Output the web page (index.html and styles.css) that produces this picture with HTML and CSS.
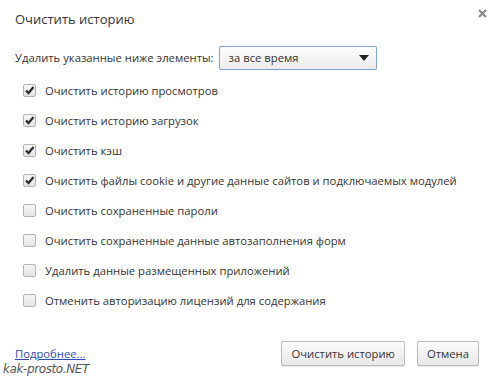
FILE: index.html
```html
<!DOCTYPE html>
<html lang="ru">
<head>
<meta charset="utf-8">
<link rel="stylesheet" href="styles.css">
</head>
<body>
<div class="dialog">
  <div class="header">
    <h1 class="title">Очистить историю</h1>
    <svg class="close" width="9" height="9" viewBox="0 0 9 9"><path d="M1 1L8 8M8 1L1 8" stroke="#8a8a8a" stroke-width="2.2"/></svg>
  </div>
  <div class="range">
    <span>Удалить указанные ниже элементы:</span>
    <div class="select"><span>за все время</span><svg width="10" height="6" viewBox="0 0 10 6"><path d="M0 0H10L5 6Z" fill="#222"/></svg></div>
  </div>
  <ul class="list">
    <li><span class="cb on"><svg width="11" height="11" viewBox="0 0 11 11"><path d="M2 5.5L4.5 8L9.5 2" stroke="#2b2b2b" stroke-width="2.2" fill="none"/></svg></span>Очистить историю просмотров</li>
    <li><span class="cb on"><svg width="11" height="11" viewBox="0 0 11 11"><path d="M2 5.5L4.5 8L9.5 2" stroke="#2b2b2b" stroke-width="2.2" fill="none"/></svg></span>Очистить историю загрузок</li>
    <li><span class="cb on"><svg width="11" height="11" viewBox="0 0 11 11"><path d="M2 5.5L4.5 8L9.5 2" stroke="#2b2b2b" stroke-width="2.2" fill="none"/></svg></span>Очистить кэш</li>
    <li><span class="cb on"><svg width="11" height="11" viewBox="0 0 11 11"><path d="M2 5.5L4.5 8L9.5 2" stroke="#2b2b2b" stroke-width="2.2" fill="none"/></svg></span>Очистить файлы cookie и другие данные сайтов и подключаемых модулей</li>
    <li><span class="cb"></span>Очистить сохраненные пароли</li>
    <li><span class="cb"></span>Очистить сохраненные данные автозаполнения форм</li>
    <li><span class="cb"></span>Удалить данные размещенных приложений</li>
    <li><span class="cb"></span>Отменить авторизацию лицензий для содержания</li>
  </ul>
  <div class="footer">
    <a class="more" href="#">Подробнее...</a>
    <div class="buttons">
      <button class="btn">Очистить историю</button>
      <button class="btn">Отмена</button>
    </div>
  </div>
  <div class="wm">kak-prosto.NET</div>
</div>
</body>
</html>
```
FILE: styles.css
```css
html, body { margin: 0; padding: 0; background: #fff; }
body {
  width: 498px; height: 379px; overflow: hidden;
  font-family: "Open Sans", "Noto Sans", sans-serif;
  font-size: 11.27px; color: #333;
}
.dialog { position: relative; height: 379px; padding: 0 0 0 15px; box-sizing: border-box; }
.header { display: flex; justify-content: space-between; align-items: flex-start; height: 45px; padding-right: 11px; }
.title { margin: 0; padding-top: 10px; font-weight: normal; font-size: 13px; color: #333; }
.close { margin-top: 9px; }
.range { display: flex; align-items: center; gap: 5px; height: 25px; }
.select {
  width: 158px; height: 24px; box-sizing: border-box;
  border: 1px solid #7fa3d6; border-radius: 2px;
  background: linear-gradient(#fdfdfd, #ececec);
  box-shadow: 0 0 1px #a9c3ea;
  display: flex; align-items: center; justify-content: space-between;
  padding: 0 7px 0 9px;
}
.list { list-style: none; margin: 5px 0 0 0; padding: 0 0 0 8px; }
.list li { display: flex; align-items: center; height: 30px; }
.cb {
  width: 13px; height: 13px; box-sizing: border-box;
  border: 1px solid #b4b4b4; border-radius: 2px;
  background: linear-gradient(#f7f7f7, #e4e4e4);
  margin-right: 9px; display: flex; align-items: center; justify-content: center;
  flex: none;
}
.footer { display: flex; justify-content: space-between; align-items: center; margin-top: 26px; padding-right: 19px; }
.more { color: #2a4bb8; text-decoration: underline; }
.buttons { display: flex; gap: 12px; }
.btn {
  font-family: inherit; font-size: 11.27px; color: #333;
  height: 25px; padding: 0 9px;
  border: 1px solid #b9b9b9; border-radius: 2px;
  background: linear-gradient(#fcfcfc, #e8e8e8);
  box-shadow: 0 1px 0 rgba(0,0,0,0.08);
}
.wm {
  position: absolute; left: 3px; top: 362px;
  font-family: "DejaVu Sans", sans-serif; font-style: italic; font-size: 12px; color: #555;
  letter-spacing: -0.4px;
}
```
